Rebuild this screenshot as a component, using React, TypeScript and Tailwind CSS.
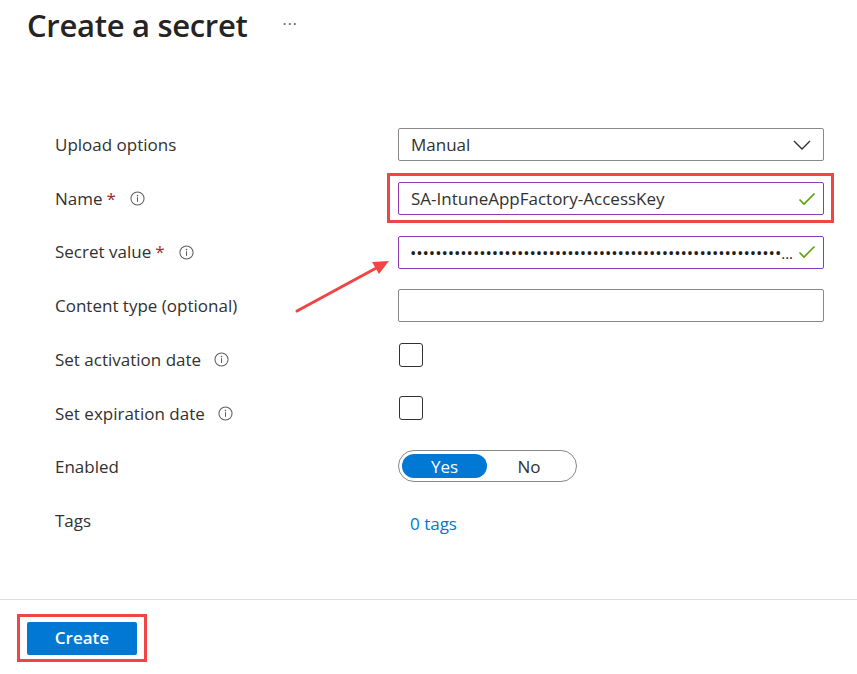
import React from "react";

const Info = () => (
  <svg width="15" height="15" viewBox="0 0 16 16" className="inline-block">
    <circle cx="8" cy="8" r="7" fill="none" stroke="#605e5c" strokeWidth="1.1" />
    <circle cx="8" cy="4.9" r="0.85" fill="#605e5c" />
    <rect x="7.45" y="6.6" width="1.1" height="5" fill="#605e5c" />
  </svg>
);

const Check = () => (
  <svg width="18" height="14" viewBox="0 0 18 14">
    <polyline points="1.5,7.5 6,12 16.5,1.5" fill="none" stroke="#57a300" strokeWidth="1.6" />
  </svg>
);

const Req = () => <span className="text-[#a4262c] ml-[4px]">*</span>;

function Row({ label, children }: { label: React.ReactNode; children?: React.ReactNode }) {
  return (
    <div className="flex items-center h-[53.7px]">
      <div className="w-[398px] pl-[55px] flex items-center">{label}</div>
      <div className="w-[426px] relative">{children}</div>
    </div>
  );
}

export default function App() {
  const dots = "•".repeat(59);
  return (
    <div className="w-[857px] h-[674px] bg-white relative font-['Open_Sans',sans-serif] text-[#323130] text-[17px] overflow-hidden">
      <div className="flex items-center pl-[27px] pt-[4px] h-[46px]">
        <h1 className="text-[31px] font-semibold text-[#252423] tracking-[-0.3px]">Create a secret</h1>
        <span className="ml-[35px] text-[#605e5c] text-[16px] tracking-[1px] -mt-[2px]">···</span>
      </div>

      <div className="mt-[72px]">
        <Row label={<span>Upload options</span>}>
          <div className="h-[33px] border border-[#8a8886] rounded-[2px] flex items-center justify-between pl-[12px] pr-[12px]">
            <span>Manual</span>
            <svg width="18" height="10" viewBox="0 0 18 10">
              <polyline points="1,1 9,9 17,1" fill="none" stroke="#323130" strokeWidth="1.4" />
            </svg>
          </div>
        </Row>
        <Row
          label={
            <span className="flex items-center">
              Name<Req />
              <span className="ml-[14px] flex"><Info /></span>
            </span>
          }
        >
          <div className="h-[33px] border border-[#8e3ab0] rounded-[2px] flex items-center justify-between pl-[12px] pr-[7px]">
            <span>SA-IntuneAppFactory-AccessKey</span>
            <Check />
          </div>
          <div className="absolute -left-[11px] -right-[10px] -top-[9px] -bottom-[8px] border-[3px] border-[#f04545] pointer-events-none" />
        </Row>
        <Row
          label={
            <span className="flex items-center">
              Secret value<Req />
              <span className="ml-[14px] flex"><Info /></span>
            </span>
          }
        >
          <div className="h-[33px] border border-[#8e3ab0] rounded-[2px] flex items-center justify-between pl-[11px] pr-[7px]">
            <span className="whitespace-nowrap text-[17px] leading-none text-[#201f1e] tracking-[-0.1px]">
              {dots}
              <span className="text-[15px] tracking-[0px]">...</span>
            </span>
            <Check />
          </div>
        </Row>
        <Row label={<span>Content type (optional)</span>}>
          <div className="h-[33px] border border-[#8a8886] rounded-[2px]" />
        </Row>
        <Row
          label={
            <span className="flex items-center">
              Set activation date
              <span className="ml-[13px] flex"><Info /></span>
            </span>
          }
        >
          <div className="w-[24px] h-[24px] border border-[#323130] rounded-[3px] ml-[1px] mb-[10px]" />
        </Row>
        <Row
          label={
            <span className="flex items-center">
              Set expiration date
              <span className="ml-[13px] flex"><Info /></span>
            </span>
          }
        >
          <div className="w-[24px] h-[24px] border border-[#323130] rounded-[3px] ml-[1px] mb-[10px]" />
        </Row>
        <Row label={<span>Enabled</span>}>
          <div className="w-[179px] h-[32px] border border-[#8a8886] rounded-full flex items-center p-[3px] -mt-[1px]">
            <div className="w-[85px] h-[24px] rounded-full bg-[#0078d4] text-white flex items-center justify-center">Yes</div>
            <div className="flex-1 flex items-center justify-center pr-[2px]">No</div>
          </div>
        </Row>
        <Row label={<span>Tags</span>}>
          <span className="pl-[12px] pt-[7px] block text-[#0078d4]">0 tags</span>
        </Row>
      </div>

      <div className="mt-[51px] border-t border-[#e1dfdd]">
        <div className="pl-[27px] pt-[22px] relative">
          <button className="w-[110px] h-[33px] bg-[#0078d4] text-white font-semibold rounded-[2px] text-[17px]">Create</button>
          <div className="absolute left-[17px] top-[14px] w-[130px] h-[48px] border-[3px] border-[#f04545] pointer-events-none" />
        </div>
      </div>

      <svg className="absolute left-0 top-0 pointer-events-none" width="857" height="674">
        <line x1="297" y1="311" x2="380" y2="266" stroke="#f04545" strokeWidth="3" strokeLinecap="round" />
        <polygon points="389,261 372,262 379,274" fill="#f04545" />
      </svg>
    </div>
  );
}
